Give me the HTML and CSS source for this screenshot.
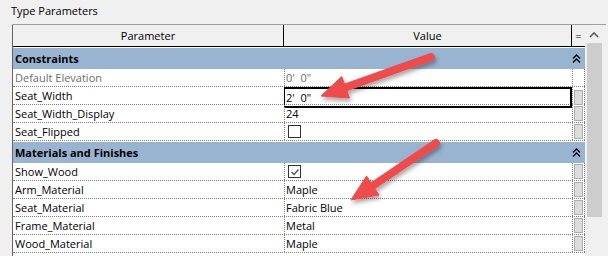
FILE: index.html
```html
<!DOCTYPE html>
<html>
<head>
<meta charset="utf-8">
<link rel="stylesheet" href="styles.css">
</head>
<body>
<div class="title">Type Parameters</div>
<div class="panel">
  <div class="grid">
    <div class="hdr">
      <div class="hc">Parameter</div>
      <div class="hc">Value</div>
      <div class="hc eq">=</div>
    </div>
    <div class="band"><span>Constraints</span><svg class="chev" width="9" height="9" viewBox="0 0 9 9"><path d="M1 4.5 L4.5 1 L8 4.5 M1 8.5 L4.5 5 L8 8.5" fill="none" stroke="#000" stroke-width="1.3"/></svg></div>
    <div class="row muted"><div class="p">Default Elevation</div><div class="v">0'&nbsp;&nbsp;0"</div><div class="e blank"></div></div>
    <div class="row"><div class="p">Seat_Width</div><div class="v sel">2'&nbsp;&nbsp;0"</div><div class="e"><span class="btn"></span></div></div>
    <div class="row"><div class="p">Seat_Width_Display</div><div class="v">24</div><div class="e"><span class="btn"></span></div></div>
    <div class="row"><div class="p">Seat_Flipped</div><div class="v"><span class="cb"></span></div><div class="e"><span class="btn"></span></div></div>
    <div class="band"><span>Materials and Finishes</span><svg class="chev" width="9" height="9" viewBox="0 0 9 9"><path d="M1 4.5 L4.5 1 L8 4.5 M1 8.5 L4.5 5 L8 8.5" fill="none" stroke="#000" stroke-width="1.3"/></svg></div>
    <div class="row"><div class="p">Show_Wood</div><div class="v"><span class="cb"><svg width="10" height="10" viewBox="0 0 10 10"><path d="M1.5 5 L4 7.5 L8.5 2.5" fill="none" stroke="#555" stroke-width="1.4"/></svg></span></div><div class="e"><span class="btn"></span></div></div>
    <div class="row"><div class="p">Arm_Material</div><div class="v">Maple</div><div class="e"><span class="btn"></span></div></div>
    <div class="row"><div class="p">Seat_Material</div><div class="v">Fabric Blue</div><div class="e"><span class="btn"></span></div></div>
    <div class="row"><div class="p">Frame_Material</div><div class="v">Metal</div><div class="e"><span class="btn"></span></div></div>
    <div class="row"><div class="p">Wood_Material</div><div class="v">Maple</div><div class="e"><span class="btn"></span></div></div>
  </div>
  <div class="scroll">
    <div class="up"><svg width="10" height="7" viewBox="0 0 10 7"><path d="M1 6 L5 2 L9 6" fill="none" stroke="#606060" stroke-width="1.6"/></svg></div>
    <div class="thumb"></div>
  </div>
</div>
<svg class="arrows" width="608" height="256" viewBox="0 0 608 256">
  <defs>
    <filter id="sh" x="-20%" y="-20%" width="140%" height="160%">
      <feDropShadow dx="1.5" dy="3" stdDeviation="2" flood-color="#000" flood-opacity="0.35"/>
    </filter>
  </defs>
  <g filter="url(#sh)" fill="#f04b4b" stroke="#f04b4b">
    <line x1="431" y1="57" x2="344" y2="88" stroke-width="8" stroke-linecap="round"/>
    <polygon points="321,96 349.5,98 341.8,76.5" stroke-width="1" stroke-linejoin="round"/>
    <line x1="436" y1="143" x2="371" y2="187" stroke-width="8" stroke-linecap="round"/>
    <polygon points="351,200 379,195 366.5,176" stroke-width="1" stroke-linejoin="round"/>
  </g>
</svg>
</body>
</html>
```
FILE: styles.css
```css
* { box-sizing: border-box; }
body {
  margin: 0;
  width: 608px;
  height: 256px;
  overflow: hidden;
  position: relative;
  background: #f0f0f0;
  font-family: "Open Sans", "Noto Sans", sans-serif;
  font-size: 11px;
  color: #000;
}
.title {
  height: 24px;
  padding: 3px 0 0 11px;
  line-height: 16px;
}
.panel {
  display: flex;
  margin-left: 12px;
  width: 594px;
  height: 232px;
  border-top: 1px solid #a0a0a0;
}
.grid {
  width: 573px;
  border-left: 1px solid #646464;
  background: #fff;
}
.hdr {
  display: grid;
  grid-template-columns: 271px 288px 13px;
  height: 22px;
  background: #f0f0f0;
  border-bottom: 1px solid #000;
}
.hc {
  display: flex;
  align-items: center;
  justify-content: center;
  border-right: 1px solid #000;
}
.hc.eq { border-right: none; }
.band {
  margin-top: 1px;
  height: 21px;
  background: #99b4d1;
  font-weight: bold;
  display: flex;
  align-items: center;
  justify-content: space-between;
  padding: 0 4px 0 2px;
}
.chev { display: block; }
.row {
  display: grid;
  grid-template-columns: 271px 288px 13px;
  height: 18px;
  border-bottom: 1px dotted #808080;
}
.p {
  padding-left: 2px;
  line-height: 17px;
  white-space: nowrap;
}
.v {
  border-left: 1px dotted #808080;
  padding-left: 1px;
  line-height: 17px;
  white-space: nowrap;
  display: flex;
  align-items: center;
}
.muted { color: #6d6d6d; }
.v.sel {
  border: 2px solid #000;
  border-left-width: 1px;
  padding-left: 1px;
}
.e {
  border-left: 1px dotted #808080;
  border-right: 1px dotted #808080;
  display: flex;
  align-items: center;
  justify-content: center;
}
.btn {
  display: block;
  width: 9px;
  height: 15px;
  background: #dcdcdc;
  border: 1px solid #adadad;
}
.cb {
  display: flex;
  align-items: center;
  justify-content: center;
  width: 13px;
  height: 13px;
  margin-left: 2px;
  border: 1px solid #333;
  background: #fff;
}
.cb svg { display: block; }
.scroll {
  width: 21px;
  background: #f0f0f0;
}
.up {
  height: 18px;
  display: flex;
  align-items: center;
  justify-content: center;
  padding-right: 3px;
}
.thumb {
  margin-left: 2px;
  width: 15px;
  height: 174px;
  background: #cdcdcd;
}
.arrows {
  position: absolute;
  left: 0;
  top: 0;
  pointer-events: none;
}
```
